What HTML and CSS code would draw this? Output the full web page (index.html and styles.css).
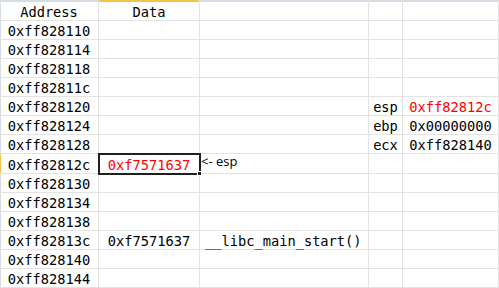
FILE: index.html
```html
<!DOCTYPE html>
<html>
<head>
<meta charset="utf-8">
<link rel="stylesheet" href="styles.css">
</head>
<body>
<div class="sheet">
  <div class="c hdr first">Address</div><div class="c hdr sel-col">Data</div><div class="c hdr"></div><div class="c hdr"></div><div class="c hdr"></div>

  <div class="c first">0xff828110</div><div class="c"></div><div class="c"></div><div class="c"></div><div class="c"></div>
  <div class="c first">0xff828114</div><div class="c"></div><div class="c"></div><div class="c"></div><div class="c"></div>
  <div class="c first">0xff828118</div><div class="c"></div><div class="c"></div><div class="c"></div><div class="c"></div>
  <div class="c first">0xff82811c</div><div class="c"></div><div class="c"></div><div class="c"></div><div class="c"></div>
  <div class="c first">0xff828120</div><div class="c"></div><div class="c"></div><div class="c">esp</div><div class="c red">0xff82812c</div>
  <div class="c first">0xff828124</div><div class="c"></div><div class="c"></div><div class="c">ebp</div><div class="c">0x00000000</div>
  <div class="c first">0xff828128</div><div class="c"></div><div class="c"></div><div class="c">ecx</div><div class="c">0xff828140</div>
  <div class="c first sel-row">0xff82812c</div><div class="c red active">0xf7571637<span class="handle"></span></div><div class="c note">&lt;- esp</div><div class="c"></div><div class="c"></div>
  <div class="c first">0xff828130</div><div class="c"></div><div class="c"></div><div class="c"></div><div class="c"></div>
  <div class="c first">0xff828134</div><div class="c"></div><div class="c"></div><div class="c"></div><div class="c"></div>
  <div class="c first">0xff828138</div><div class="c"></div><div class="c"></div><div class="c"></div><div class="c"></div>
  <div class="c first">0xff82813c</div><div class="c">0xf7571637</div><div class="c left">__libc_main_start()</div><div class="c"></div><div class="c"></div>
  <div class="c first">0xff828140</div><div class="c"></div><div class="c"></div><div class="c"></div><div class="c"></div>
  <div class="c first">0xff828144</div><div class="c"></div><div class="c"></div><div class="c"></div><div class="c"></div>
</div>
</body>
</html>
```

FILE: styles.css
```css
html, body {
  margin: 0;
  padding: 0;
  background: #ffffff;
}

.sheet {
  width: 499px;
  height: 288px;
  display: grid;
  grid-template-columns: 99px 101px 169px 34px 96px;
  grid-template-rows: 21px repeat(14, 1fr);
  font-family: "DejaVu Sans Mono", "Liberation Mono", monospace;
  font-size: 13.7px;
  color: #000000;
  overflow: hidden;
}

.c {
  border-right: 1px solid #e3e3e3;
  border-bottom: 1px solid #e3e3e3;
  display: flex;
  align-items: center;
  justify-content: center;
  padding-top: 2px;
  white-space: nowrap;
  position: relative;
}

.hdr {
  box-shadow: inset 0 2px 0 #d6dce6;
  padding-top: 3px;
}

.hdr.sel-col {
  box-shadow: inset 0 2px 0 #f2c44a;
}

.first {
  box-shadow: inset 1px 0 0 #d6dce6;
}

.hdr.first {
  box-shadow: inset 0 2px 0 #d6dce6, inset 1px 0 0 #d6dce6;
}

.first.sel-row {
  box-shadow: inset 1px 0 0 #f2c44a;
}

.red {
  color: #ff0000;
}

.left {
  justify-content: flex-start;
  padding-left: 5px;
  overflow: visible;
}

.note {
  justify-content: flex-start;
  align-items: flex-start;
  padding: 0 0 0 1px;
  font-family: "Open Sans", "Liberation Sans", sans-serif;
  font-size: 13px;
  line-height: 15px;
}

.active {
  outline: 2px solid #1f1f1f;
  outline-offset: -1px;
  z-index: 2;
}

.handle {
  position: absolute;
  right: -3px;
  bottom: -3px;
  width: 3px;
  height: 3px;
  background: #1f1f1f;
  border: 1px solid #ffffff;
}
```
